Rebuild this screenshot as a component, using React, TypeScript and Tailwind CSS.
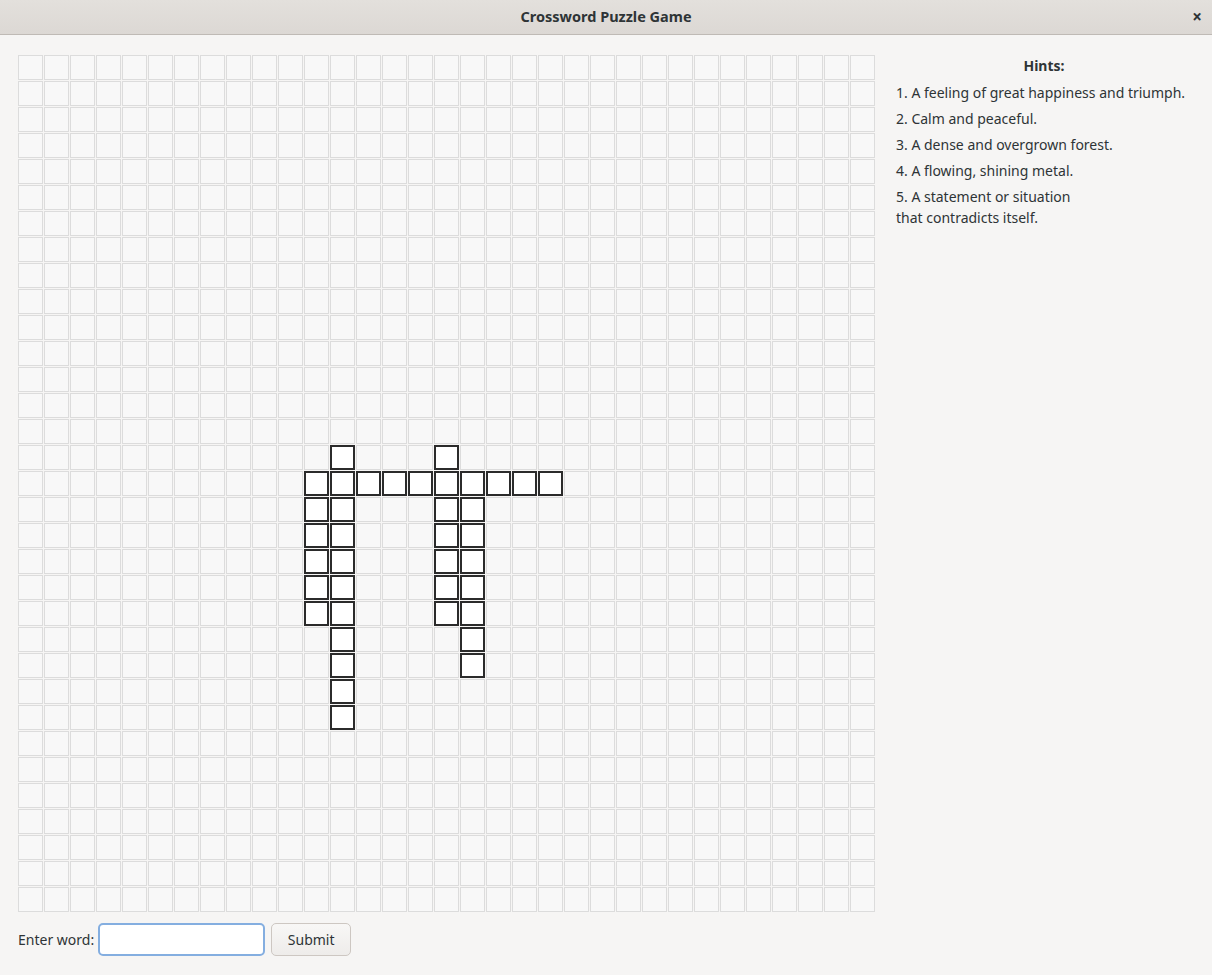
import React from 'react';

const SIZE = 33;

// word cells as [row, col]
const cells: Array<[number, number]> = [];
const add = (r: number, c: number) => cells.push([r, c]);
for (let c = 11; c <= 20; c++) add(16, c);
for (let r = 15; r <= 25; r++) add(r, 12);
for (let r = 16; r <= 21; r++) add(r, 11);
for (let r = 15; r <= 21; r++) add(r, 16);
for (let r = 16; r <= 23; r++) add(r, 17);
const active = new Set(cells.map(([r, c]) => `${r}-${c}`));

const hints = [
  '1. A feeling of great happiness and triumph.',
  '2. Calm and peaceful.',
  '3. A dense and overgrown forest.',
  '4. A flowing, shining metal.',
  '5. A statement or situation\nthat contradicts itself.',
];

export default function App() {
  return (
    <div className="w-[1212px] h-[975px] bg-[#f6f5f4] text-[#2e3436] flex flex-col" style={{ fontFamily: '"Noto Sans", "Open Sans", sans-serif' }}>
      <header className="relative h-[35px] shrink-0 flex items-center justify-center border-b border-[#bfbab5] bg-gradient-to-b from-[#e3e0dc] to-[#dcd8d4]">
        <span className="text-[14.5px] font-bold text-[#2e3436]">Crossword Puzzle Game</span>
        <span className="absolute right-[10px] top-[8px] text-[17px] font-bold leading-none text-[#2e3436]">×</span>
      </header>

      <main className="flex flex-col pl-[18px] pt-[20px]">
        <div className="flex">
          <div className="grid shrink-0 grid-cols-[repeat(33,25px)] auto-rows-[25px] gap-px">
            {Array.from({ length: SIZE * SIZE }).map((_, i) => {
              const r = Math.floor(i / SIZE);
              const c = i % SIZE;
              return active.has(`${r}-${c}`) ? (
                <div key={i} className="border-2 border-[#2b2b2b] bg-white" />
              ) : (
                <div key={i} className="border border-[#dcdcdc] bg-[#f8f8f8]" />
              );
            })}
          </div>

          <aside className="ml-[11px] w-[316px] shrink-0 px-[10px] text-[14px] leading-[21px] text-[#2e3436]">
            <h2 className="text-center font-bold mb-[6px]">Hints:</h2>
            <ul className="flex flex-col gap-[5px]">
              {hints.map((h) => (
                <li key={h} className="whitespace-pre">{h}</li>
              ))}
            </ul>
          </aside>
        </div>

        <div className="flex items-center mt-[11px] text-[14px]">
          <span className="mr-[4px]">Enter word:</span>
          <input className="w-[167px] h-[33px] rounded-[5px] border-2 border-[#84aee0] bg-white outline-none px-2" />
          <button className="ml-[6px] w-[80px] h-[33px] rounded-[5px] border border-[#cdc7c2] bg-gradient-to-b from-[#f8f7f6] to-[#eeecea] text-[#2e3436]">
            Submit
          </button>
        </div>
      </main>
    </div>
  );
}
